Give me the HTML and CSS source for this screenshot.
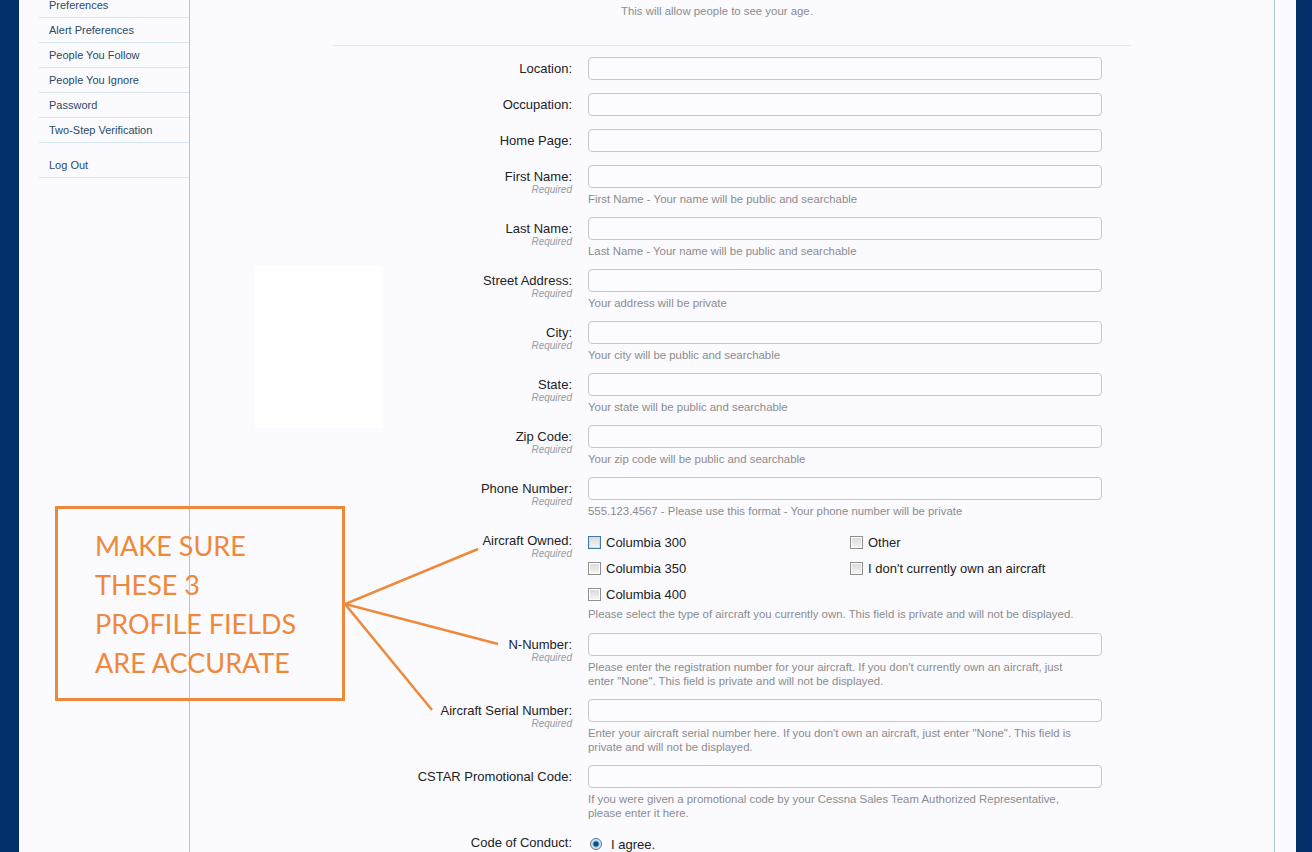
FILE: index.html
```html
<!DOCTYPE html>
<html lang="en">
<head>
<meta charset="UTF-8" />
<title>Personal Details</title>
<link rel="stylesheet" href="styles.css">
</head>
<body>
<div class="page">
  <aside class="sidebar">
    <ul class="menu">
      <li><a href="#">Preferences</a></li>
      <li><a href="#">Alert Preferences</a></li>
      <li><a href="#">People You Follow</a></li>
      <li><a href="#">People You Ignore</a></li>
      <li><a href="#">Password</a></li>
      <li><a href="#">Two-Step Verification</a></li>
    </ul>
    <ul class="menu menu-end">
      <li><a href="#">Log Out</a></li>
    </ul>
  </aside>

  <main class="content">
    <form class="profile">
      <div class="row row-top">
        <div></div>
        <div class="ctrl"><p class="hint indent">This will allow people to see your age.</p></div>
      </div>
      <hr class="divider">

      <div class="row">
        <label class="lbl">Location:</label>
        <div class="ctrl"><input type="text" class="txt"></div>
      </div>
      <div class="row">
        <label class="lbl">Occupation:</label>
        <div class="ctrl"><input type="text" class="txt"></div>
      </div>
      <div class="row">
        <label class="lbl">Home Page:</label>
        <div class="ctrl"><input type="text" class="txt"></div>
      </div>
      <div class="row">
        <label class="lbl">First Name:<span class="req">Required</span></label>
        <div class="ctrl"><input type="text" class="txt"><p class="hint">First Name - Your name will be public and searchable</p></div>
      </div>
      <div class="row">
        <label class="lbl">Last Name:<span class="req">Required</span></label>
        <div class="ctrl"><input type="text" class="txt"><p class="hint">Last Name - Your name will be public and searchable</p></div>
      </div>
      <div class="row">
        <label class="lbl">Street Address:<span class="req">Required</span></label>
        <div class="ctrl"><input type="text" class="txt"><p class="hint">Your address will be private</p></div>
      </div>
      <div class="row">
        <label class="lbl">City:<span class="req">Required</span></label>
        <div class="ctrl"><input type="text" class="txt"><p class="hint">Your city will be public and searchable</p></div>
      </div>
      <div class="row">
        <label class="lbl">State:<span class="req">Required</span></label>
        <div class="ctrl"><input type="text" class="txt"><p class="hint">Your state will be public and searchable</p></div>
      </div>
      <div class="row">
        <label class="lbl">Zip Code:<span class="req">Required</span></label>
        <div class="ctrl"><input type="text" class="txt"><p class="hint">Your zip code will be public and searchable</p></div>
      </div>
      <div class="row">
        <label class="lbl">Phone Number:<span class="req">Required</span></label>
        <div class="ctrl"><input type="text" class="txt"><p class="hint">555.123.4567 - Please use this format - Your phone number will be private</p></div>
      </div>
      <div class="row row-checks">
        <label class="lbl">Aircraft Owned:<span class="req">Required</span></label>
        <div class="ctrl">
          <div class="checks">
            <span class="check"><span class="box focus"></span>Columbia 300</span>
            <span class="check"><span class="box"></span>Other</span>
            <span class="check"><span class="box"></span>Columbia 350</span>
            <span class="check"><span class="box"></span>I don't currently own an aircraft</span>
            <span class="check"><span class="box"></span>Columbia 400</span>
          </div>
          <p class="hint flush">Please select the type of aircraft you currently own. This field is private and will not be displayed.</p>
        </div>
      </div>
      <div class="row">
        <label class="lbl">N-Number:<span class="req">Required</span></label>
        <div class="ctrl"><input type="text" class="txt"><p class="hint">Please enter the registration number for your aircraft. If you don't currently own an aircraft, just enter "None". This field is private and will not be displayed.</p></div>
      </div>
      <div class="row">
        <label class="lbl">Aircraft Serial Number:<span class="req">Required</span></label>
        <div class="ctrl"><input type="text" class="txt"><p class="hint">Enter your aircraft serial number here. If you don't own an aircraft, just enter "None". This field is private and will not be displayed.</p></div>
      </div>
      <div class="row">
        <label class="lbl">CSTAR Promotional Code:</label>
        <div class="ctrl"><input type="text" class="txt"><p class="hint">If you were given a promotional code by your Cessna Sales Team Authorized Representative, please enter it here.</p></div>
      </div>
      <div class="row row-radio">
        <label class="lbl">Code of Conduct:</label>
        <div class="ctrl"><span class="check"><span class="dot"></span>I agree.</span></div>
      </div>
    </form>
  </main>

  <div class="avatar"></div>

  <div class="callout">
    <p>MAKE SURE</p>
    <p>THESE 3</p>
    <p>PROFILE FIELDS</p>
    <p>ARE ACCURATE</p>
  </div>
  <svg class="pointers" width="480" height="240" viewBox="0 0 480 240">
    <line x1="0" y1="100" x2="133" y2="45" />
    <line x1="0" y1="100" x2="153" y2="140" />
    <line x1="0" y1="100" x2="87" y2="206" />
  </svg>
</div>
</body>
</html>
```

FILE: styles.css
```css
html, body {
  margin: 0;
  padding: 0;
  background: #03306b;
  overflow: hidden;
}
body {
  font-family: "Liberation Sans", Arial, sans-serif;
  color: #222;
}
.page {
  position: relative;
  display: flex;
  margin: 0 16px 0 19px;
  min-height: 900px;
  background: #fafaff;
}

/* account sidebar */
.sidebar {
  width: 171px;
  border-right: 1px solid #aec6d6;
  padding-left: 20px;
  box-sizing: border-box;
  flex-shrink: 0;
}
.menu {
  list-style: none;
  margin: -7px 0 0;
  padding: 0;
}
.menu li {
  border-bottom: 1px solid #d5e6f1;
}
.menu a {
  display: block;
  height: 24px;
  line-height: 24px;
  padding-left: 10px;
  font-size: 11px;
  color: #2b4a62;
  text-decoration: none;
}
.menu-end {
  margin-top: 10px;
}

/* main column */
.content {
  flex: 0 0 1085px;
  box-sizing: border-box;
  border-right: 1px solid #aec6d6;
}
.profile {
  width: 798px;
  margin: 0 auto;
}
.row {
  display: grid;
  grid-template-columns: 239px 514px;
  column-gap: 16px;
  margin-bottom: 13px;
}
.row-top {
  padding-top: 4px;
  margin-bottom: 0;
}
.divider {
  border: 0;
  border-top: 1px solid #dde9f0;
  margin: 27px 0 11px;
}
.lbl {
  text-align: right;
  font-size: 13px;
  line-height: 16px;
  padding-top: 4px;
  color: #222;
}
.req {
  display: block;
  font-size: 10px;
  line-height: 10px;
  font-style: italic;
  color: #999;
  margin-top: 0;
}
.txt {
  display: block;
  width: 514px;
  height: 23px;
  box-sizing: border-box;
  margin: 0;
  border: 1px solid #c7c7c7;
  border-radius: 4px;
  background: #fcfcff;
}
.hint {
  margin: 4px 0 -2px;
  max-width: 500px;
  font-size: 11.4px;
  line-height: 14px;
  color: #8c8c8c;
}
.hint.indent {
  margin: 0 0 0 33px;
}
.hint.flush {
  margin: 0;
}

/* aircraft checkboxes */
.row-checks {
  margin-bottom: 12px;
}
.checks {
  display: grid;
  grid-template-columns: 262px 1fr;
  grid-auto-rows: 26px;
}
.check {
  display: flex;
  align-items: center;
  gap: 5px;
  font-size: 13px;
  color: #222;
  height: 26px;
}
.box {
  width: 11px;
  height: 11px;
  border: 1px solid #8e8f8f;
  background: linear-gradient(#d8d8d8, #f6f6f6);
  box-shadow: inset 0 0 0 1px #fff;
}
.box.focus {
  border-color: #3d7bad;
  box-shadow: inset 0 0 0 1px #c5e0f5;
}
.dot {
  width: 10px;
  height: 10px;
  margin-left: 2px;
  margin-right: 4px;
  border-radius: 50%;
  border: 1px solid #5d6f80;
  background: radial-gradient(circle, #0f4d7a 0 2px, #6fb3e6 3px, #d9e9f5 4px);
}

/* overlays */
.avatar {
  position: absolute;
  left: 236px;
  top: 266px;
  width: 128px;
  height: 162px;
  background: #fff;
}
.callout {
  position: absolute;
  left: 36px;
  top: 506px;
  width: 290px;
  height: 195px;
  box-sizing: border-box;
  border: 3px solid #f0883a;
  padding: 17px 0 0 37px;
  font-family: Lato, "Open Sans", sans-serif;
  font-size: 27px;
  color: #f0883a;
}
.callout p {
  margin: 0;
  line-height: 39px;
}
.pointers {
  position: absolute;
  left: 326px;
  top: 504px;
}
.pointers line {
  stroke: #f0883a;
  stroke-width: 2.5;
}
```
